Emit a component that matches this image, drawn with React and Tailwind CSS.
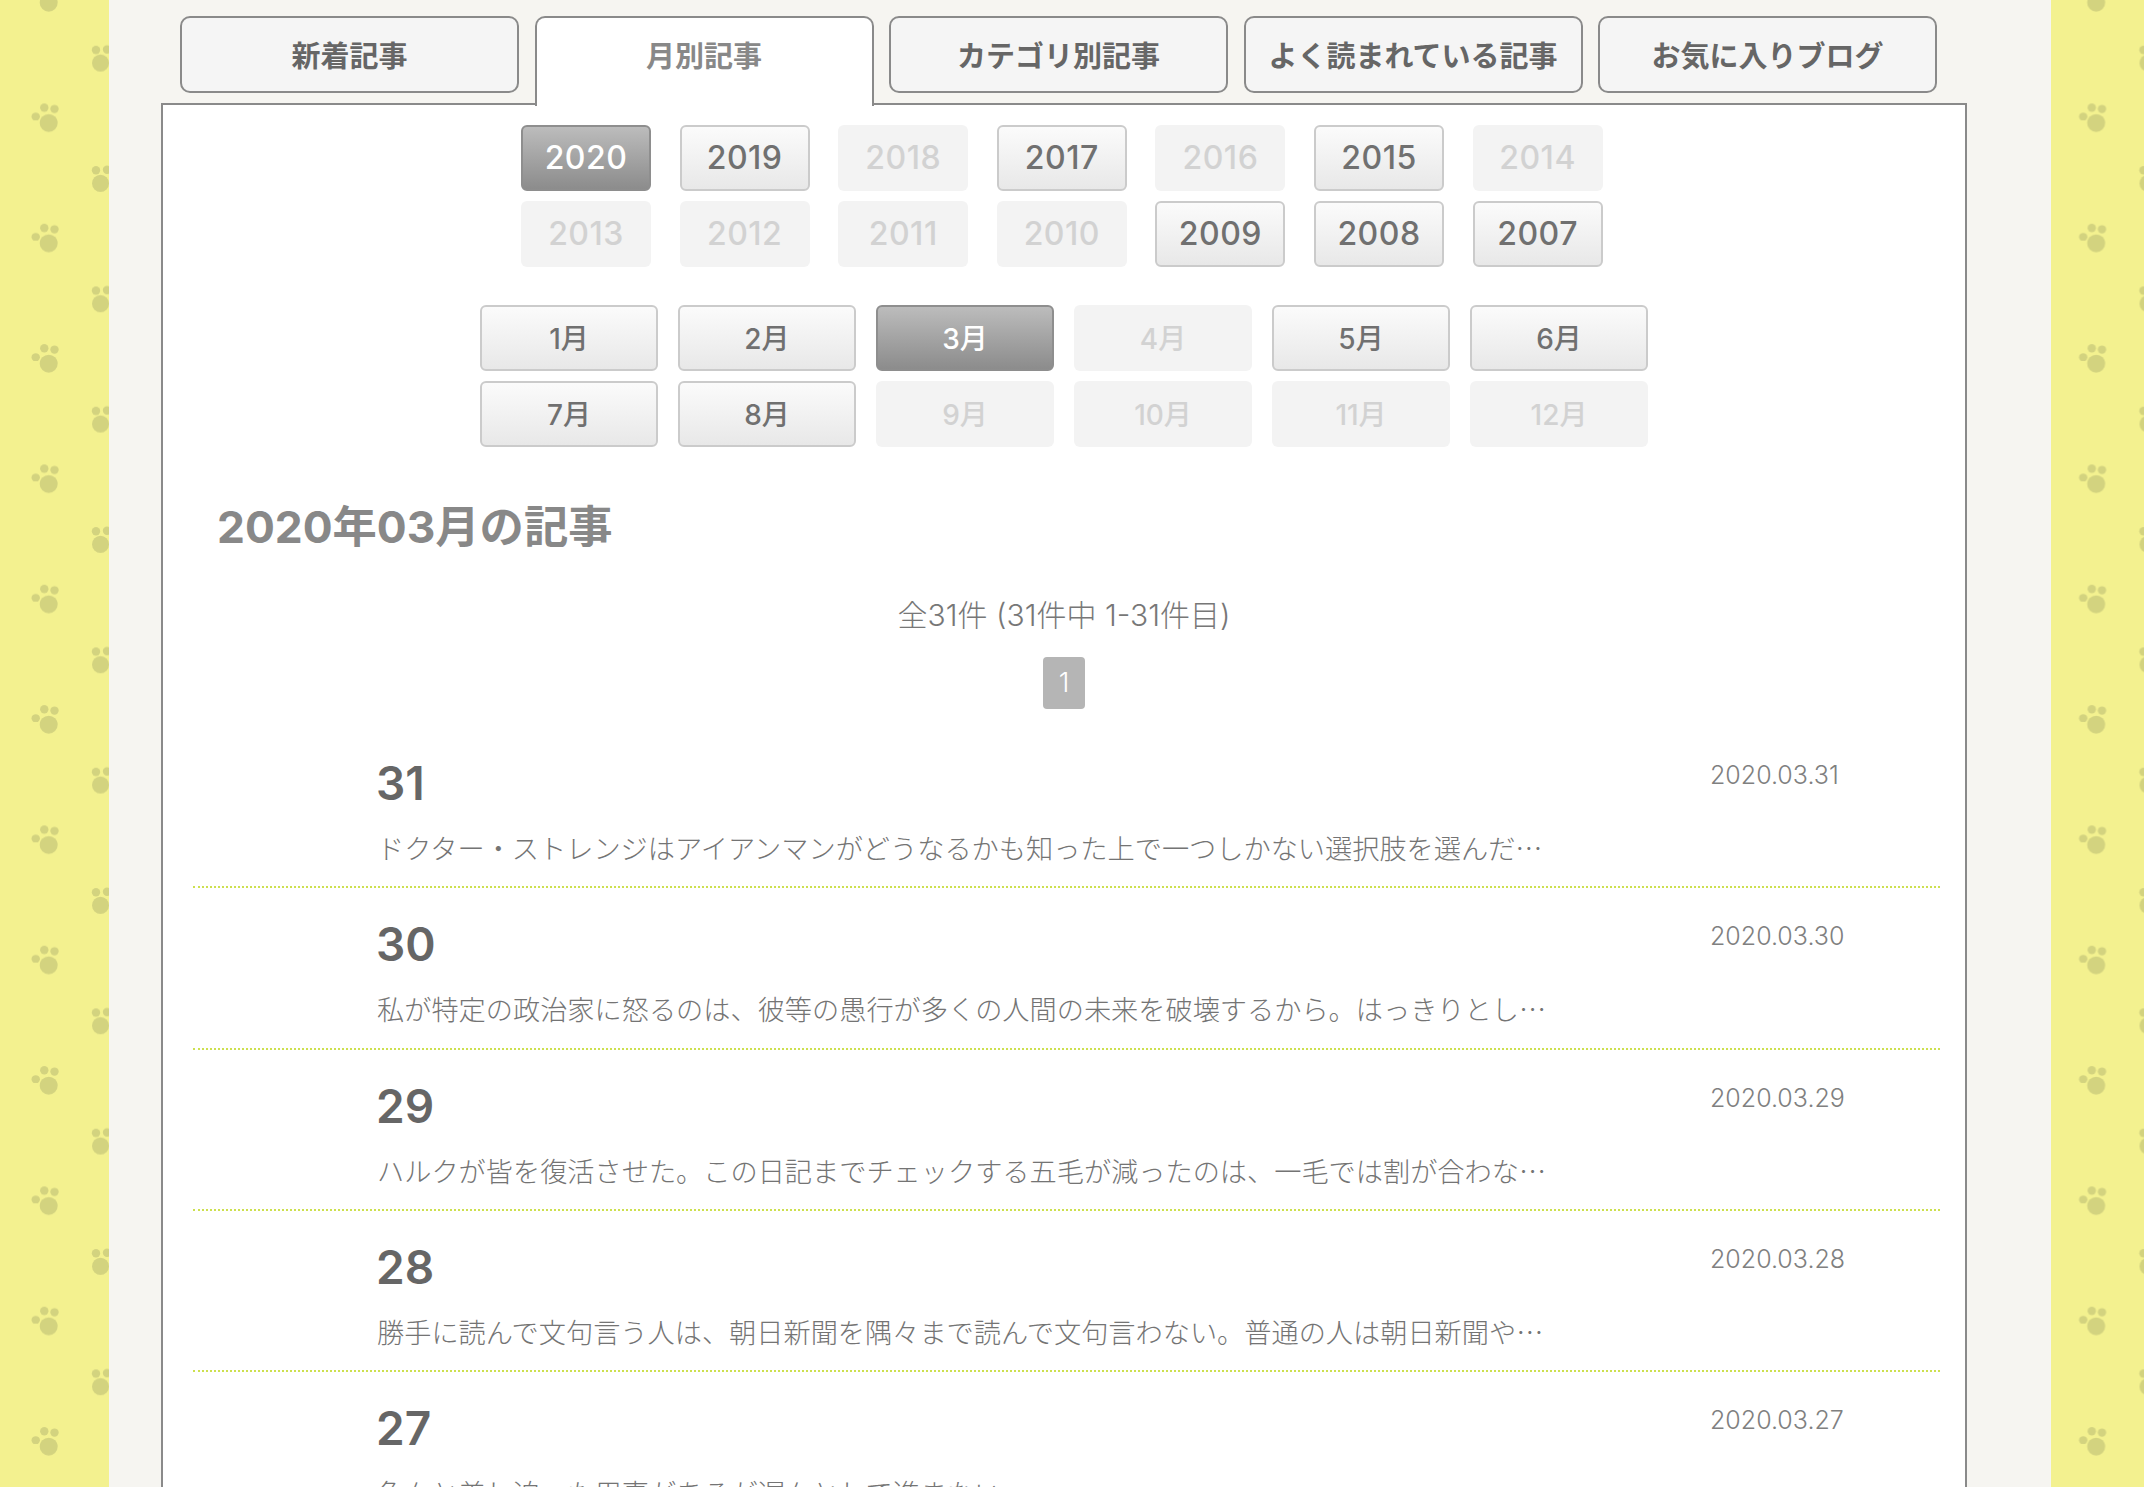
import React from 'react';

const tabs = ['新着記事', '月別記事', 'カテゴリ別記事', 'よく読まれている記事', 'お気に入りブログ'];

const years = [
  ['2020', 'active'], ['2019', 'on'], ['2018', 'off'], ['2017', 'on'], ['2016', 'off'], ['2015', 'on'], ['2014', 'off'],
  ['2013', 'off'], ['2012', 'off'], ['2011', 'off'], ['2010', 'off'], ['2009', 'on'], ['2008', 'on'], ['2007', 'on'],
];

const months = [
  ['1月', 'on'], ['2月', 'on'], ['3月', 'active'], ['4月', 'off'], ['5月', 'on'], ['6月', 'on'],
  ['7月', 'on'], ['8月', 'on'], ['9月', 'off'], ['10月', 'off'], ['11月', 'off'], ['12月', 'off'],
];

const posts = [
  { day: '31', date: '2020.03.31', text: 'ドクター・ストレンジはアイアンマンがどうなるかも知った上で一つしかない選択肢を選んだ…' },
  { day: '30', date: '2020.03.30', text: '私が特定の政治家に怒るのは、彼等の愚行が多くの人間の未来を破壊するから。はっきりとし…' },
  { day: '29', date: '2020.03.29', text: 'ハルクが皆を復活させた。この日記までチェックする五毛が減ったのは、一毛では割が合わな…' },
  { day: '28', date: '2020.03.28', text: '勝手に読んで文句言う人は、朝日新聞を隅々まで読んで文句言わない。普通の人は朝日新聞や…' },
  { day: '27', date: '2020.03.27', text: '色々と差し迫った用事があるが遅々として進まない' },
];

const stateClass = {
  active: 'border-2 border-[#8e8e8e] bg-gradient-to-b from-[#bcbcbc] to-[#8c8c8c] text-white',
  on: 'border-2 border-[#cbcbcb] bg-gradient-to-b from-[#fbfbfb] to-[#e8e8e8] text-[#707070]',
  off: 'bg-[#f3f3f3] text-[#d2d2d2]',
};

function PawStrip({ id, shift = 0 }) {
  return (
    <svg className="block h-full w-full" aria-hidden="true">
      <defs>
        <pattern id={id} width="200" height="120.33" patternUnits="userSpaceOnUse" patternTransform={`translate(${shift} 0)`}>
          <g fill="#d3d37f">
            <circle cx="48.7" cy="2.7" r="9" />
            <circle cx="35.7" cy="116.7" r="4.2" />
            <circle cx="44.3" cy="107.7" r="4.2" />
            <circle cx="54.5" cy="109" r="4.2" />
            <circle cx="48.7" cy="123" r="9" />
            <circle cx="100.5" cy="63" r="8.5" />
            <circle cx="96" cy="50" r="4.2" />
            <circle cx="107" cy="49.5" r="4.2" />
          </g>
        </pattern>
      </defs>
      <rect width="100%" height="100%" fill={`url(#${id})`} />
    </svg>
  );
}

function PickButton({ label, state, className = '' }) {
  return (
    <div className={`flex h-[66px] items-center justify-center rounded-[6px] font-medium ${stateClass[state]} ${className}`}>
      {label}
    </div>
  );
}

export default function App() {
  return (
    <div lang="ja" className="flex h-[1487px] overflow-hidden bg-[#f3f18f] font-['Inter','Noto_Sans_CJK_JP',sans-serif]">
      <div className="w-[109px] shrink-0">
        <PawStrip id="paws-left" />
      </div>

      <main className="w-[1942px] shrink-0 bg-[#f6f5f1] pt-[16px]">
        {/* Tabs */}
        <div className="flex h-[87px] items-start gap-[15.5px] pl-[71px]">
          {tabs.map((tab) =>
            tab === '月別記事' ? (
              <div
                key={tab}
                className="relative z-10 flex h-[90px] w-[339px] items-start justify-center rounded-t-[10px] border-2 border-b-0 border-[#8a8a8a] bg-white pt-[20px] text-[29px] font-bold leading-[38px] text-[#888888]"
              >
                {tab}
              </div>
            ) : (
              <div
                key={tab}
                className="flex h-[77px] w-[339px] items-center justify-center rounded-[10px] border-2 border-[#8a8a8a] bg-[#f5f5f5] pt-[5px] text-[29px] font-bold text-[#666666]"
              >
                {tab}
              </div>
            )
          )}
        </div>

        {/* Panel */}
        <div className="ml-[52px] h-[1400px] w-[1806px] border-2 border-[#8a8a8a] bg-white pt-[20px]">
          <div className="ml-[358px] grid w-[1085px] grid-cols-[repeat(7,130px)] gap-x-[28.6px] gap-y-[10px] text-[32px] tracking-[0.5px]">
            {years.map(([label, state]) => (
              <PickButton key={label} label={label} state={state} />
            ))}
          </div>

          <div className="ml-[317px] mt-[38px] grid w-[1168px] grid-cols-[repeat(6,178px)] gap-x-[20px] gap-y-[10px] text-[28px]">
            {months.map(([label, state]) => (
              <PickButton key={label} label={label} state={state} className="pt-[2px]" />
            ))}
          </div>

          <h2 className="ml-[54px] mt-[50px] text-[44.3px] font-bold leading-[60px] text-[#888888]">2020年03月の記事</h2>

          <p className="mt-[38px] text-center text-[30px] font-light leading-[40px] text-[#777777]">全31件 (31件中 1-31件目)</p>

          <div className="mt-[22px] flex justify-center">
            <div className="flex h-[52px] w-[42px] items-center justify-center rounded-[4px] bg-[#b5b5b5] text-[27px] font-light text-white">1</div>
          </div>

          {/* Posts */}
          <div className="ml-[30px] mt-[18px] w-[1747px]">
            {posts.map((post) => (
              <div key={post.day} className="flex h-[161.33px] border-b-2 border-dotted border-[#cde04f] pl-[184px]">
                <div className="flex-1">
                  <div className="ml-[-1px] mt-[31px] text-[46px] font-semibold leading-[50px] text-[#666666]">{post.day}</div>
                  <p className="mt-[19px] font-['Noto_Sans_CJK_JP',sans-serif] text-[27.2px] font-light leading-[40px] text-[#747474]">{post.text}</p>
                </div>
                <div className="mt-[31px] w-[230px] text-[25px] font-light leading-[34px] text-[#808080]">{post.date}</div>
              </div>
            ))}
          </div>
        </div>
      </main>

      <div className="w-[93px] shrink-0">
        <PawStrip id="paws-right" shift={-3.5} />
      </div>
    </div>
  );
}
